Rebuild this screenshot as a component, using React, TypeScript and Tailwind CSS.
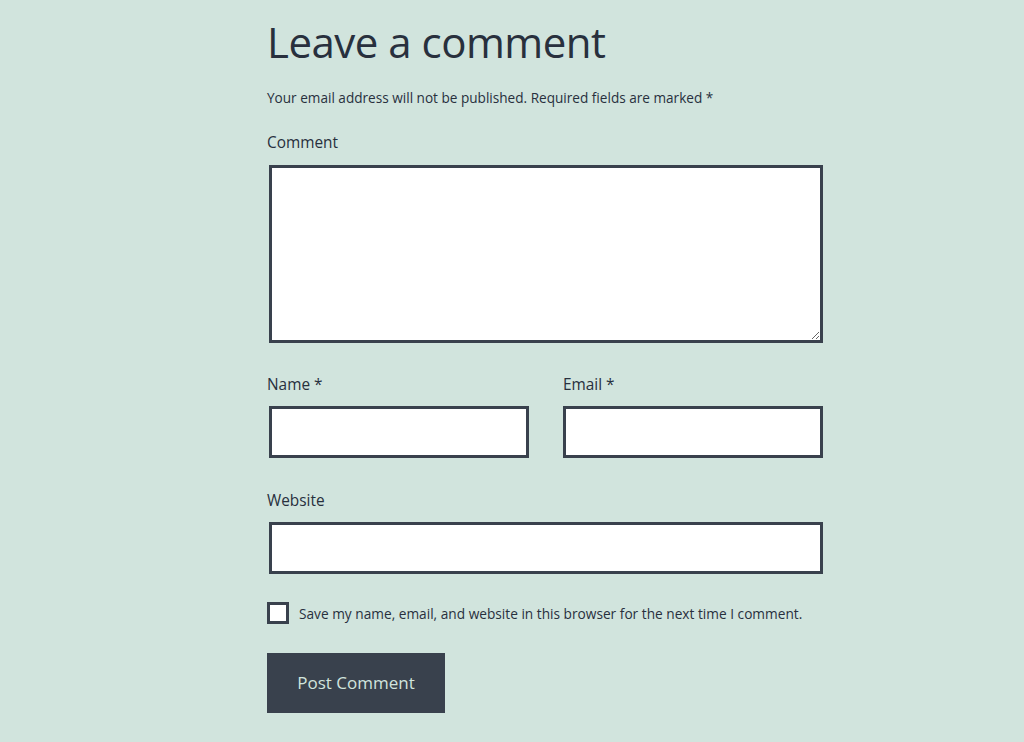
import React from 'react';

const font = { fontFamily: '"Open Sans", "Noto Sans", sans-serif' };

function Field({ label, className, children }: { label: string; className?: string; children: React.ReactNode }) {
  return (
    <div className={className}>
      <label className="block pt-[1px] text-[15.4px] leading-[20px] text-[#28303d]">{label}</label>
      {children}
    </div>
  );
}

export default function App() {
  return (
    <div className="min-h-[742px] w-full bg-[#d1e4dd] text-[#28303d]" style={font}>
      <div className="ml-[267px] w-[556px] pt-[16px]">
        <h2 className="text-[42px] leading-[52px] font-normal tracking-[-0.5px]">Leave a comment</h2>
        <p className="mt-[20px] text-[13.6px] leading-[20px]">
          Your email address will not be published. Required fields are marked *
        </p>
        <Field label="Comment" className="mt-[24px]">
          <textarea className="mt-[12px] ml-[2px] block h-[178px] w-[554px] border-[3px] border-[#39414d] bg-white outline-none" />
        </Field>
        <div className="mt-[31px] flex gap-[34px]">
          <Field label="Name *" className="w-[262px]">
            <input className="mt-[11px] ml-[2px] block h-[52px] w-[260px] border-[3px] border-[#39414d] bg-white outline-none" />
          </Field>
          <Field label="Email *" className="w-[260px]">
            <input className="mt-[11px] block h-[52px] w-[260px] border-[3px] border-[#39414d] bg-white outline-none" />
          </Field>
        </div>
        <Field label="Website" className="mt-[32px]">
          <input className="mt-[11px] ml-[2px] block h-[52px] w-[554px] border-[3px] border-[#39414d] bg-white outline-none" />
        </Field>
        <div className="mt-[28px] flex items-center gap-[10px]">
          <span className="block h-[22px] w-[22px] border-[3px] border-[#39414d] bg-white" />
          <span className="text-[13.7px] leading-[20px] pt-[2px]">
            Save my name, email, and website in this browser for the next time I comment.
          </span>
        </div>
        <button className="mt-[29px] h-[60px] w-[178px] bg-[#39414d] text-[17px] text-[#d1e4dd]">
          Post Comment
        </button>
      </div>
    </div>
  );
}
